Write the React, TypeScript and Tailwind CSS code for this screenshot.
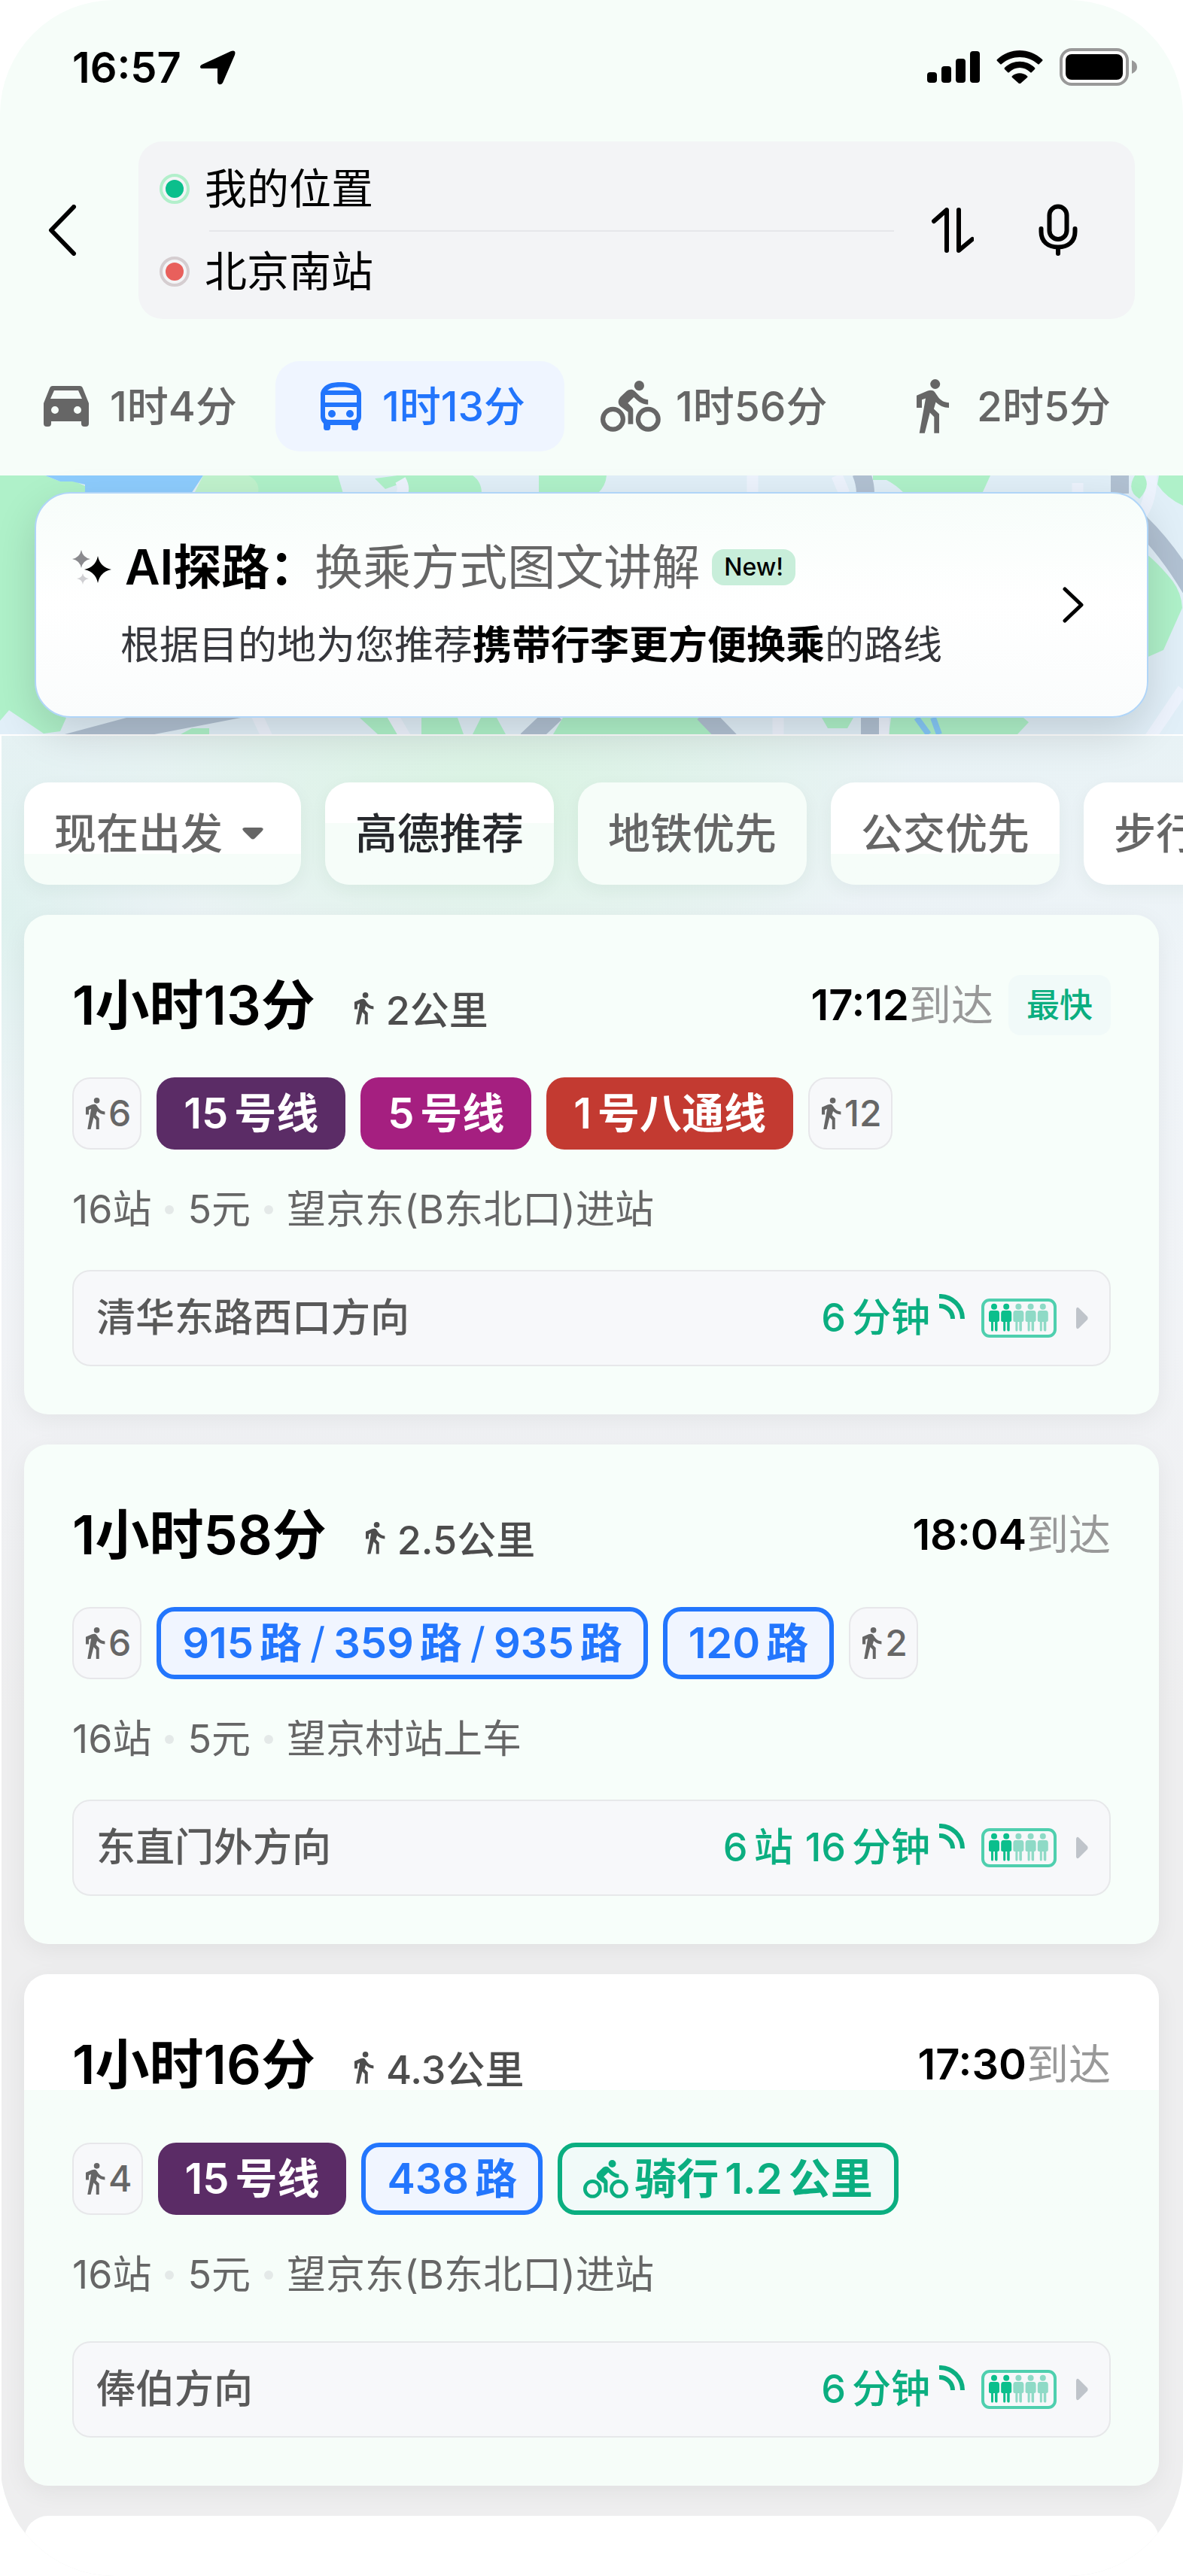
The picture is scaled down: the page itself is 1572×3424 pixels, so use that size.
import type { ReactNode } from "react";

const fontStack = "font-['Inter','Noto_Sans_CJK_SC',sans-serif]";

/* ---------- icons ---------- */

const WalkIcon = ({ className = "" }) => (
  <svg viewBox="0 0 44 72" className={className} fill="currentColor" aria-hidden="true">
    <circle cx="24.7" cy="6.5" r="6.5" />
    <path d="M0 21.7 14 15.7C18 14.2 22 14.2 24 17L28.7 23.8C32 28.5 37 31 43 31.2V37.9C36 37.9 30 35 25.5 30.5L22.9 39.5 30 46.3V71.8H23.3V50.2L17.7 44.6 10.8 71.8H3.7L12 25.4 7 27.3V37.9H0Z" />
  </svg>
);

const BikeIcon = ({ className = "" }) => (
  <svg viewBox="0 0 80 68" className={className} fill="currentColor" aria-hidden="true">
    <circle cx="16.5" cy="51.3" r="13.4" fill="none" stroke="currentColor" strokeWidth="6.2" />
    <circle cx="63.3" cy="51.3" r="13.4" fill="none" stroke="currentColor" strokeWidth="6.2" />
    <circle cx="51.4" cy="6.7" r="6.6" />
    <path d="M26.8 21.3 34.8 13.8C37.8 11.2 42.6 11 45.4 13.8L50.5 18.8C54 22.4 58 25 63.2 25.2V31.8C56 31.6 50.5 28.4 46 23.6L44.3 22 36.3 29.8 41 34.4C42.6 36 43.3 37.2 43.3 39V57.8H36.6V41.8L26.8 34.6C22.8 31.4 22.6 25.6 26.8 21.3Z" />
  </svg>
);

const CarIcon = () => (
  <svg viewBox="0 0 60 54" className="w-15 shrink-0" fill="currentColor" aria-hidden="true">
    <path
      fillRule="evenodd"
      d="M12 0H48Q51 0 52 3L60 23V50Q60 54 56 54H54Q50 54 50 50V47H10V50Q10 54 6 54H4Q0 54 0 50V23L8 3Q9 0 12 0ZM14 6 9 17H51L46 6ZM15 27a5 5 0 1 0 0 10 5 5 0 0 0 0-10ZM45 27a5 5 0 1 0 0 10 5 5 0 0 0 0-10Z"
    />
  </svg>
);

const BusIcon = () => (
  <svg viewBox="0 0 54 64" className="w-[54px] shrink-0" fill="currentColor" aria-hidden="true">
    <path
      fillRule="evenodd"
      d="M4 7C9 1 18 0 27 0S45 1 50 7Q54 11 54 16V46Q54 51 50 55V60Q50 64 47 64H44Q41 64 41 60V57H13V60Q13 64 10 64H7Q4 64 4 60V55Q0 51 0 46V16Q0 11 4 7ZM9 11H45C40 7 34 6.5 27 6.5S14 7 9 11ZM6 17V27H48V17ZM6 33V45Q6 50 11 50H43Q48 50 48 45V33ZM15 37a5 5 0 1 0 0 10 5 5 0 0 0 0-10ZM39 37a5 5 0 1 0 0 10 5 5 0 0 0 0-10Z"
    />
  </svg>
);

const SignalIcon = () => (
  <svg viewBox="0 0 34 34" className="w-[34px] shrink-0" fill="none" stroke="currentColor" strokeWidth="6" aria-hidden="true">
    <path d="M0 3A30 30 0 0 1 31 33M0 16A17 17 0 0 1 18 33" />
  </svg>
);

const people = [0, 1, 2, 3, 4];

const CrowdIcon = () => (
  <svg viewBox="0 0 100 52" className="mr-[26px] ml-[22px] w-25 shrink-0" role="img" aria-label="不拥挤">
    <rect x="2" y="2" width="96" height="48" rx="9" fill="none" stroke="#4fcfae" strokeWidth="4" />
    {people.map((n) => (
      <g key={n} transform={`translate(${n * 16.2} 0)`} fill={n < 2 ? "#0bbf8c" : "#8edac6"}>
        <circle cx="17" cy="10.7" r="4" />
        <path d="M13 16H21Q24 16 24 20V29Q24 31 21.5 31V42Q21.5 43.6 20 43.6T18 42V31H16V42Q16 43.6 14.5 43.6T13 42V31Q10 31 10 29V20Q10 16 13 16Z" />
      </g>
    ))}
  </svg>
);

/* ---------- header ---------- */

const StatusBar = () => (
  <div className="flex h-[188px] items-start justify-between pt-14 pl-24 pr-15">
    <div className="flex items-center gap-6">
      <span className="text-[56px] leading-[68px] font-semibold">16:57</span>
      <svg viewBox="0 0 48 46" className="w-12" aria-hidden="true">
        <path d="M3 19 42 1Q49-1 47 6L31 43Q29 46 26 45 24 44 24 42V24H4Q1 24 1 22T3 19Z" />
      </svg>
    </div>
    <div className="flex items-center gap-[22px] pt-2">
      <svg viewBox="0 0 70 42" className="w-[70px]" aria-hidden="true">
        <rect x="0" y="28" width="13" height="14" rx="4" />
        <rect x="19" y="20" width="13" height="22" rx="4" />
        <rect x="38" y="10" width="13" height="32" rx="4" />
        <rect x="57" y="0" width="13" height="42" rx="4" />
      </svg>
      <svg viewBox="0 0 62 44" className="w-[62px]" aria-hidden="true">
        <path d="M1 12C18-4 44-4 61 12Q62 13 61 14L57 18Q56 19 55 18C41 6 21 6 7 18Q6 19 5 18L1 14Q0 13 1 12Z" />
        <path d="M11 23C22 12 40 12 51 23Q52 24 51 25L47 29Q46 30 45 29C37 21 25 21 17 29Q16 30 15 29L11 25Q10 24 11 23Z" />
        <path d="M21 34C27 29 35 29 41 34Q42 35 41 36L32 44Q31 45 30 44L21 36Q20 35 21 34Z" />
      </svg>
      <svg viewBox="0 0 104 50" className="w-26" aria-hidden="true">
        <rect x="2" y="2" width="88" height="46" rx="14" fill="#fff" stroke="#999" strokeWidth="4" />
        <rect x="8" y="8" width="76" height="34" rx="8" />
        <path d="M96 16Q103 19 103 25T96 34Z" fill="#999" />
      </svg>
    </div>
  </div>
);

const SearchBox = () => (
  <div className="flex items-center pr-16">
    <button aria-label="返回" className="flex w-46 justify-start pl-16">
      <svg viewBox="0 0 38 68" className="w-[38px]" fill="none" stroke="#000" strokeWidth="6" strokeLinecap="round" strokeLinejoin="round" aria-hidden="true">
        <path d="M34 3 4 34 34 65" />
      </svg>
    </button>
    <form className="flex flex-1 min-w-0 items-center rounded-[32px] bg-[#f3f4f6] py-2 pr-[76px] pl-7">
      <div className="min-w-0 flex-1 text-[56px] leading-[84px]">
        <div className="flex h-[110px] items-center gap-5">
          <span className="flex size-10 shrink-0 items-center justify-center rounded-full border-4 border-[#b2efcb]">
            <span className="size-6 rounded-full bg-[#0bbf8c]" />
          </span>
          <input aria-label="起点" defaultValue="我的位置" className="min-w-0 flex-1 outline-none" />
        </div>
        <div className="ml-[66px] h-[2px] bg-[#e6e7ea] -mb-[2px]" />
        <div className="flex h-[110px] items-center gap-5">
          <span className="flex size-10 shrink-0 items-center justify-center rounded-full border-4 border-[#d5cdd0]">
            <span className="size-6 rounded-full bg-[#e8605c]" />
          </span>
          <input aria-label="终点" defaultValue="北京南站" className="min-w-0 flex-1 outline-none" />
        </div>
      </div>
      <button type="button" aria-label="交换起终点" className="ml-[50px]">
        <svg viewBox="0 0 56 60" className="w-14" fill="none" stroke="#000" strokeWidth="6" strokeLinecap="round" strokeLinejoin="round" aria-hidden="true">
          <path d="M3 18 20 3V57M36 3V57L54 42" />
        </svg>
      </button>
      <button type="button" aria-label="语音输入" className="ml-[86px]">
        <svg viewBox="0 0 52 70" className="w-13" fill="none" stroke="#000" strokeWidth="6" strokeLinecap="round" aria-hidden="true">
          <rect x="14.5" y="3.5" width="23" height="43.5" rx="11.5" />
          <path d="M3.5 33V37C3.5 50 12.5 57.5 26 57.5S48.5 50 48.5 37V33M26 58V66" />
        </svg>
      </button>
    </form>
  </div>
);

const ModeTabs = () => (
  <nav className="mt-14 flex h-30 items-center pr-24 pl-[58px] text-[55px] font-medium text-[#666]">
    <button className="flex items-center gap-7">
      <CarIcon />
      1时4分
    </button>
    <button aria-current="page" className="ml-[51px] flex h-30 w-96 items-center gap-7 rounded-[32px] bg-[#eff5ff] pl-15 text-[#2275fc]">
      <BusIcon />
      1时13分
    </button>
    <button className="ml-12 flex items-center gap-5">
      <BikeIcon className="w-20" />
      1时56分
    </button>
    <button className="ml-auto flex items-center gap-9">
      <WalkIcon className="w-11" />
      2时5分
    </button>
  </nav>
);

/* ---------- map and AI card ---------- */

const MapStrip = () => (
  <svg viewBox="0 0 1572 344" preserveAspectRatio="none" className="absolute inset-0 size-full" aria-hidden="true">
    <rect width="1572" height="344" fill="#e1eff8" />
    <g fill="#aff1c9">
      <path d="M0 0H60L80 8H100L113 14V200L70 310 88 322 80 340 58 343 12 312 0 326Z" />
      <path d="M330 0H449L456 24V60H330Z" />
      <path d="M528 0H628Q640 8 640 24H540V8L512 18 498 4Z" />
      <path d="M716 0H806Q805 14 794 24H716Z" />
      <path d="M1160 6H1178Q1190 12 1202 24H1305L1316 0H1160Z" />
      <path d="M1540 0H1572V40Q1550 30 1538 12Z" />
      <path d="M1500 88Q1530 105 1558 140 1570 156 1571 176L1546 232 1510 248Z" />
      <path d="M478 322H520L528 344H502Z" />
      <path d="M560 322H608L616 344H560ZM639 322H660L672 344H628ZM748 322H930L956 344H735ZM1092 322H1134L1126 336H1100ZM1184 322H1360L1367 328 1352 344H1181Z" />
      <path d="M255 336H278V344H240Z" />
    </g>
    <path d="M60 0H270L254 24H113V12L96 8 80 8Z" fill="#8dccfd" />
    <path d="M270 0H330Q346 8 343 24H258Z" fill="#c0f2cd" />
    <g fill="none" stroke="#edf3fd" strokeWidth="15">
      <path d="M1000 0V24M1112 0 1122 24M1530 0Q1530 40 1510 60M532 6Q540 20 530 30M1572 284 1526 352M1432 10V26" />
      <path d="M340 316 356 350M520 316 540 350M1034 320V346M1174 320V346" />
    </g>
    <g fill="none" stroke="#b1c1d2" strokeWidth="24">
      <path d="M1144-4Q1150 10 1150 24M1488-2V24M1512 60Q1550 96 1582 150M1156 320V346" />
      <path d="M738 316 700 352M935 316 970 352" />
    </g>
    <path d="M1508 0H1520Q1530 14 1514 31 1496 20 1508 0Z" fill="#aff1c9" />
    <path d="M86 344 168 322H320L205 344Z" fill="#b1c1d2" />
    <path d="M1218 322 1234 344M1240 322 1248 344" stroke="#86c9f8" strokeWidth="8" />
  </svg>
);

const AiCard = () => (
  <section className="relative z-10 h-[344px] px-[46px] pt-[22px]">
    <MapStrip />
    <a
      href="#ai"
      className="relative flex h-75 items-center justify-between rounded-[48px] border-2 border-[#b0d5f8] bg-linear-to-b from-[#f7fdfa] via-white to-[#fafcfc] pr-[84px] pl-12 shadow-[0_20px_56px_rgba(0,0,0,0.14)]"
    >
      <div>
        <div className="flex items-center">
          <svg viewBox="0 0 52 46" className="mr-[18px] w-13" aria-hidden="true">
            <path d="M34 8Q37 23 52 26 37 29 34 44 31 29 16 26 31 23 34 8Z" />
            <path d="M12 0Q14 10 24 12 14 14 12 24 10 14 0 12 10 10 12 0Z" fill="#8a8a8e" />
            <path d="M14 31Q15 37 22 38 15 39 14 46 13 39 6 38 13 37 14 31Z" fill="#cfcfd2" />
          </svg>
          <span className="text-[64px] leading-[84px] font-semibold">AI探路：</span>
          <span className="-ml-1 text-[64px] leading-[84px] text-[#666]">换乘方式图文讲解</span>
          <span className="ml-4 rounded-2xl bg-[#c8eeda] px-4 text-[32px] leading-12 font-medium">New!</span>
        </div>
        <p className="mt-6 ml-16 text-[52px] leading-[76px] text-[#36373c]">
          根据目的地为您推荐<strong className="font-bold text-black">携带行李更方便换乘</strong>的路线
        </p>
      </div>
      <svg viewBox="0 0 28 48" className="w-7" fill="none" stroke="#000" strokeWidth="5" strokeLinecap="round" strokeLinejoin="round" aria-hidden="true">
        <path d="M3 3 25 24 3 45" />
      </svg>
    </a>
  </section>
);

/* ---------- filters ---------- */

const Chip = ({ children, className }: { children: ReactNode; className: string }) => (
  <button className={`flex h-34 shrink-0 items-center rounded-[32px] px-10 shadow-[0_8px_24px_rgba(0,60,40,0.05)] ${className}`}>
    {children}
  </button>
);

const Filters = () => (
  <div className="flex gap-8 overflow-hidden pt-[62px] pb-10 pl-[30px] text-[56px] font-medium text-[#666]">
    <Chip className="bg-linear-to-b from-white from-70% to-[#f6fdf9] to-70%">
      现在出发
      <svg viewBox="0 0 28 16" className="mr-[10px] ml-[26px] w-7" fill="currentColor" aria-hidden="true">
        <path d="M3 0H25Q30 1 26 5L17 14Q14 17 11 14L2 5Q-2 1 3 0Z" />
      </svg>
    </Chip>
    <Chip className="bg-linear-to-b from-white from-40% to-[#f6fdf9] to-40% text-[#26282c]">高德推荐</Chip>
    <Chip className="bg-[#f6fdf9]">地铁优先</Chip>
    <Chip className="bg-linear-to-b from-white from-70% to-[#f6fdf9] to-70%">公交优先</Chip>
    <Chip className="bg-white">步行少</Chip>
  </div>
);

/* ---------- routes ---------- */

type Leg = { kind: "walk" | "line15" | "line5" | "line1" | "bus" | "ride"; text: string[] };

const legStyle = {
  walk: "border-2 border-[#e7e7ea] bg-[#f7f8fa] text-[#666] pl-4 pr-3 text-[48px] gap-1 font-medium",
  line15: "bg-[#5b2c66] text-white px-9 gap-2 text-[56px] font-semibold",
  line5: "bg-[#a51f80] text-white px-9 gap-2 text-[56px] font-semibold",
  line1: "bg-[#c33a31] text-white px-9 gap-2 text-[56px] font-semibold",
  bus: "border-6 border-[#2376fd] bg-[#f0f5ff] text-[#2376fd] px-7 gap-2 text-[56px] font-semibold",
  ride: "border-6 border-[#0bae80] bg-[#f1faf9] text-[#0bae80] px-7 gap-2 text-[56px] font-semibold",
};

const routes: {
  duration: string;
  walk: string;
  arrive: string;
  fastest?: boolean;
  roomy?: boolean;
  legs: Leg[];
  info: string[];
  toward: string;
  wait: string[];
}[] = [
  {
    duration: "1小时13分",
    walk: "2公里",
    arrive: "17:12",
    fastest: true,
    legs: [
      { kind: "walk", text: ["6"] },
      { kind: "line15", text: ["15", "号线"] },
      { kind: "line5", text: ["5", "号线"] },
      { kind: "line1", text: ["1", "号八通线"] },
      { kind: "walk", text: ["12"] },
    ],
    info: ["16站", "5元", "望京东(B东北口)进站"],
    toward: "清华东路西口方向",
    wait: ["6", "分钟"],
  },
  {
    duration: "1小时58分",
    walk: "2.5公里",
    arrive: "18:04",
    legs: [
      { kind: "walk", text: ["6"] },
      { kind: "bus", text: ["915", "路", "/", "359", "路", "/", "935", "路"] },
      { kind: "bus", text: ["120", "路"] },
      { kind: "walk", text: ["2"] },
    ],
    info: ["16站", "5元", "望京村站上车"],
    toward: "东直门外方向",
    wait: ["6", "站", "16", "分钟"],
  },
  {
    duration: "1小时16分",
    walk: "4.3公里",
    arrive: "17:30",
    roomy: true,
    legs: [
      { kind: "walk", text: ["4"] },
      { kind: "line15", text: ["15", "号线"] },
      { kind: "bus", text: ["438", "路"] },
      { kind: "ride", text: ["骑行", "1.2", "公里"] },
    ],
    info: ["16站", "5元", "望京东(B东北口)进站"],
    toward: "俸伯方向",
    wait: ["6", "分钟"],
  },
];

const LegBadge = ({ leg }: { leg: Leg }) => (
  <li className={`flex h-24 items-center rounded-3xl ${legStyle[leg.kind]}`}>
    {leg.kind === "walk" && <WalkIcon className="w-[26px]" />}
    {leg.kind === "ride" && <BikeIcon className="w-15" />}
    {leg.text.map((part, i) => (
      <span key={i} className={part === "/" ? "mx-[3px] font-normal" : ""}>
        {part}
      </span>
    ))}
  </li>
);

const RouteCard = ({ route }: { route: (typeof routes)[number] }) => (
  <article
    className={`rounded-[32px] px-16 pt-[72px] pb-16 shadow-[0_8px_32px_rgba(0,0,0,0.06)] ${
      route.roomy ? "bg-linear-to-b from-white from-[154px] to-[#f6fdf9] to-[154px]" : "bg-[#f7fefa]"
    }`}
  >
    <div className="flex h-24 items-center justify-between">
      <div className="flex items-baseline">
        <h2 className="text-[72px] leading-24 font-semibold">{route.duration}</h2>
        <span className="ml-13 flex items-baseline gap-4 text-[52px] font-medium text-[#4d4d4d]">
          <WalkIcon className="w-[26px]" />
          {route.walk}
        </span>
      </div>
      <div className="flex items-center text-[56px]">
        <span className="font-semibold">{route.arrive}</span>
        <span className="text-[#999]">到达</span>
        {route.fastest && (
          <span className="ml-5 rounded-2xl bg-[#f1faf9] px-6 text-[44px] leading-20 font-medium text-[#0bae80]">最快</span>
        )}
      </div>
    </div>
    <ul className={`flex gap-5 ${route.roomy ? "mt-14" : "mt-12"}`}>
      {route.legs.map((leg, i) => (
        <LegBadge key={i} leg={leg} />
      ))}
    </ul>
    <ul className="mt-12 flex h-16 items-center text-[52px] text-[#666]">
      {route.info.map((item, i) => (
        <li key={item} className="flex items-center">
          {i > 0 && <span className="mx-[18px] size-3 rounded-full bg-[#e4e9e8]" />}
          {item}
        </li>
      ))}
    </ul>
    <a
      href="#stop"
      className={`flex h-32 items-center justify-between rounded-3xl border-2 border-[#e7e8ea] bg-[#f7f8fa] pr-7 pl-[30px] text-[52px] font-medium text-[#595959] ${
        route.roomy ? "mt-14" : "mt-12"
      }`}
    >
      {route.toward}
      <span className="flex items-center text-[#0bae80]">
        <span className="mr-3 flex gap-2">
          {route.wait.map((part, i) => (
            <span key={i} className="odd:ml-2">
              {part}
            </span>
          ))}
        </span>
        <span className="h-16">
          <SignalIcon />
        </span>
        <CrowdIcon />
        <svg viewBox="0 0 16 30" className="w-4" fill="#bfc4ca" aria-hidden="true">
          <path d="M0 3Q1-1 4 2L15 13Q16 15 15 17L4 28Q1 31 0 27Z" />
        </svg>
      </span>
    </a>
  </article>
);

const App = () => (
  <div className="bg-white">
    <div className={`flex min-h-screen flex-col overflow-hidden rounded-[152px] bg-[#f6fdf9] text-black ${fontStack}`}>
      <header className="pb-8">
        <StatusBar />
        <SearchBox />
        <ModeTabs />
      </header>
      <AiCard />
      <main className="flex flex-1 flex-col border-t-2 border-l-2 border-white bg-[radial-gradient(560px_280px_at_42%_80px,#d9f3e2,transparent),radial-gradient(260px_340px_at_0_240px,#def1ee,transparent),linear-gradient(#e8f2f5,#eff4f8_360px,#f1f3f6_800px,#eeeeef_1300px)]">
        <Filters />
        <div className="flex flex-1 flex-col gap-10 pr-8 pl-[30px]">
          {routes.map((route) => (
            <RouteCard key={route.duration} route={route} />
          ))}
          <div className="min-h-20 flex-1 rounded-t-[32px] bg-white" />
        </div>
      </main>
    </div>
  </div>
);

export default App;
